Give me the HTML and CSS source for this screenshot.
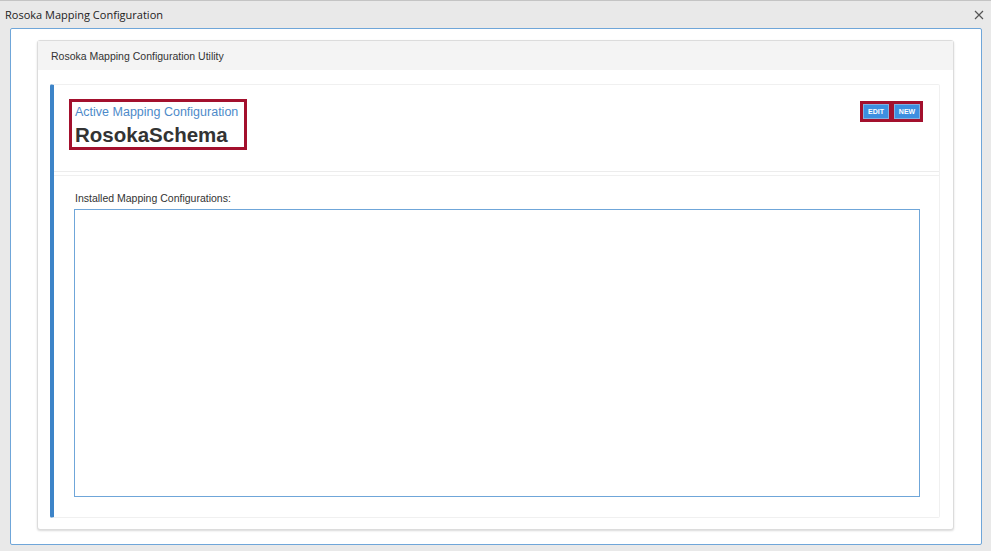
FILE: index.html
```html
<!DOCTYPE html>
<html>
<head>
<meta charset="utf-8">
<link rel="stylesheet" href="styles.css">
</head>
<body>
<div class="titlebar">
  <span class="title">Rosoka Mapping Configuration</span>
  <svg class="close" width="10" height="10" viewBox="0 0 10 10"><path d="M1 1L9 9M9 1L1 9" stroke="#555" stroke-width="1.2" fill="none"/></svg>
</div>
<div class="window">
  <div class="card">
    <div class="card-header">Rosoka Mapping Configuration Utility</div>
    <div class="card-body">
      <div class="panel">
        <div class="active-section">
          <div class="active-box">
            <div class="active-label">Active Mapping Configuration</div>
            <div class="active-name">RosokaSchema</div>
          </div>
          <div class="btn-box">
            <button class="btn">EDIT</button>
            <button class="btn">NEW</button>
          </div>
        </div>
        <div class="installed-section">
          <div class="installed-label">Installed Mapping Configurations:</div>
          <div class="listbox"></div>
        </div>
      </div>
    </div>
  </div>
</div>
</body>
</html>
```
FILE: styles.css
```css
html, body {
  margin: 0;
  padding: 0;
}
body {
  width: 991px;
  height: 551px;
  background: #e9e9e9;
  border-top: 1px solid #c4c4c4;
  box-sizing: border-box;
  overflow: hidden;
  font-family: "Liberation Sans", Arial, sans-serif;
}
.titlebar {
  height: 27px;
  display: flex;
  align-items: center;
  justify-content: space-between;
  padding: 0 7px 0 5px;
}
.title {
  font-family: "Open Sans", "Noto Sans", sans-serif;
  font-size: 11px;
  color: #222;
  padding-bottom: 1px;
}
.close {
  display: block;
}
.window {
  margin: 0 9px 0 10px;
  height: 517px;
  box-sizing: border-box;
  border: 1px solid #6fa6d9;
  border-radius: 2px;
  background: #fff;
  padding: 11px 27px 0 26px;
}
.card {
  height: 490px;
  box-sizing: border-box;
  border: 1px solid #dcdcdc;
  border-radius: 3px;
  box-shadow: 0 1px 2px rgba(0,0,0,0.15);
  background: #fff;
  display: flex;
  flex-direction: column;
}
.card-header {
  height: 29px;
  background: #f4f4f4;
  font-size: 10.5px;
  color: #333;
  padding-left: 13px;
  display: flex;
  align-items: center;
}
.card-body {
  flex: 1;
  padding: 14px 13px 11px 12px;
  display: flex;
}
.panel {
  flex: 1;
  box-sizing: border-box;
  border: 1px solid #f0f0f0;
  border-left: 4px solid #3d84c8;
  border-radius: 2px;
  display: flex;
  flex-direction: column;
}
.active-section {
  height: 87px;
  box-sizing: border-box;
  border-bottom: 1px solid #ececec;
  display: flex;
  justify-content: space-between;
  align-items: flex-start;
  padding: 14px 16px 0 15px;
}
.active-box {
  width: 178px;
  height: 51px;
  box-sizing: border-box;
  border: 3px solid #a3102d;
  padding: 2px 0 0 3px;
}
.active-label {
  font-size: 12.5px;
  color: #4d8ac9;
  line-height: 16px;
}
.active-name {
  font-size: 20.5px;
  font-weight: bold;
  color: #333;
  line-height: 26px;
  margin-top: 2px;
}
.btn-box {
  margin-top: 2px;
  background: #a3102d;
  padding: 3px;
  display: flex;
  gap: 5px;
}
.btn {
  width: 26px;
  height: 15px;
  box-sizing: border-box;
  border: 1px solid #7fb0e0;
  background: #3d8fe0;
  color: #fff;
  font-family: "Liberation Sans", Arial, sans-serif;
  font-size: 7px;
  font-weight: bold;
  padding: 0;
  margin: 0;
  line-height: 13px;
}
.installed-section {
  flex: 1;
  margin-top: 3px;
  border-top: 1px solid #f0f0f0;
  padding: 15px 19px 20px 20px;
  display: flex;
  flex-direction: column;
}
.installed-label {
  font-size: 10.5px;
  color: #333;
  line-height: 14px;
  margin-bottom: 4px;
  padding-left: 1px;
}
.listbox {
  height: 288px;
  box-sizing: border-box;
  border: 1px solid #6fa6d9;
  background: #fff;
}
```
